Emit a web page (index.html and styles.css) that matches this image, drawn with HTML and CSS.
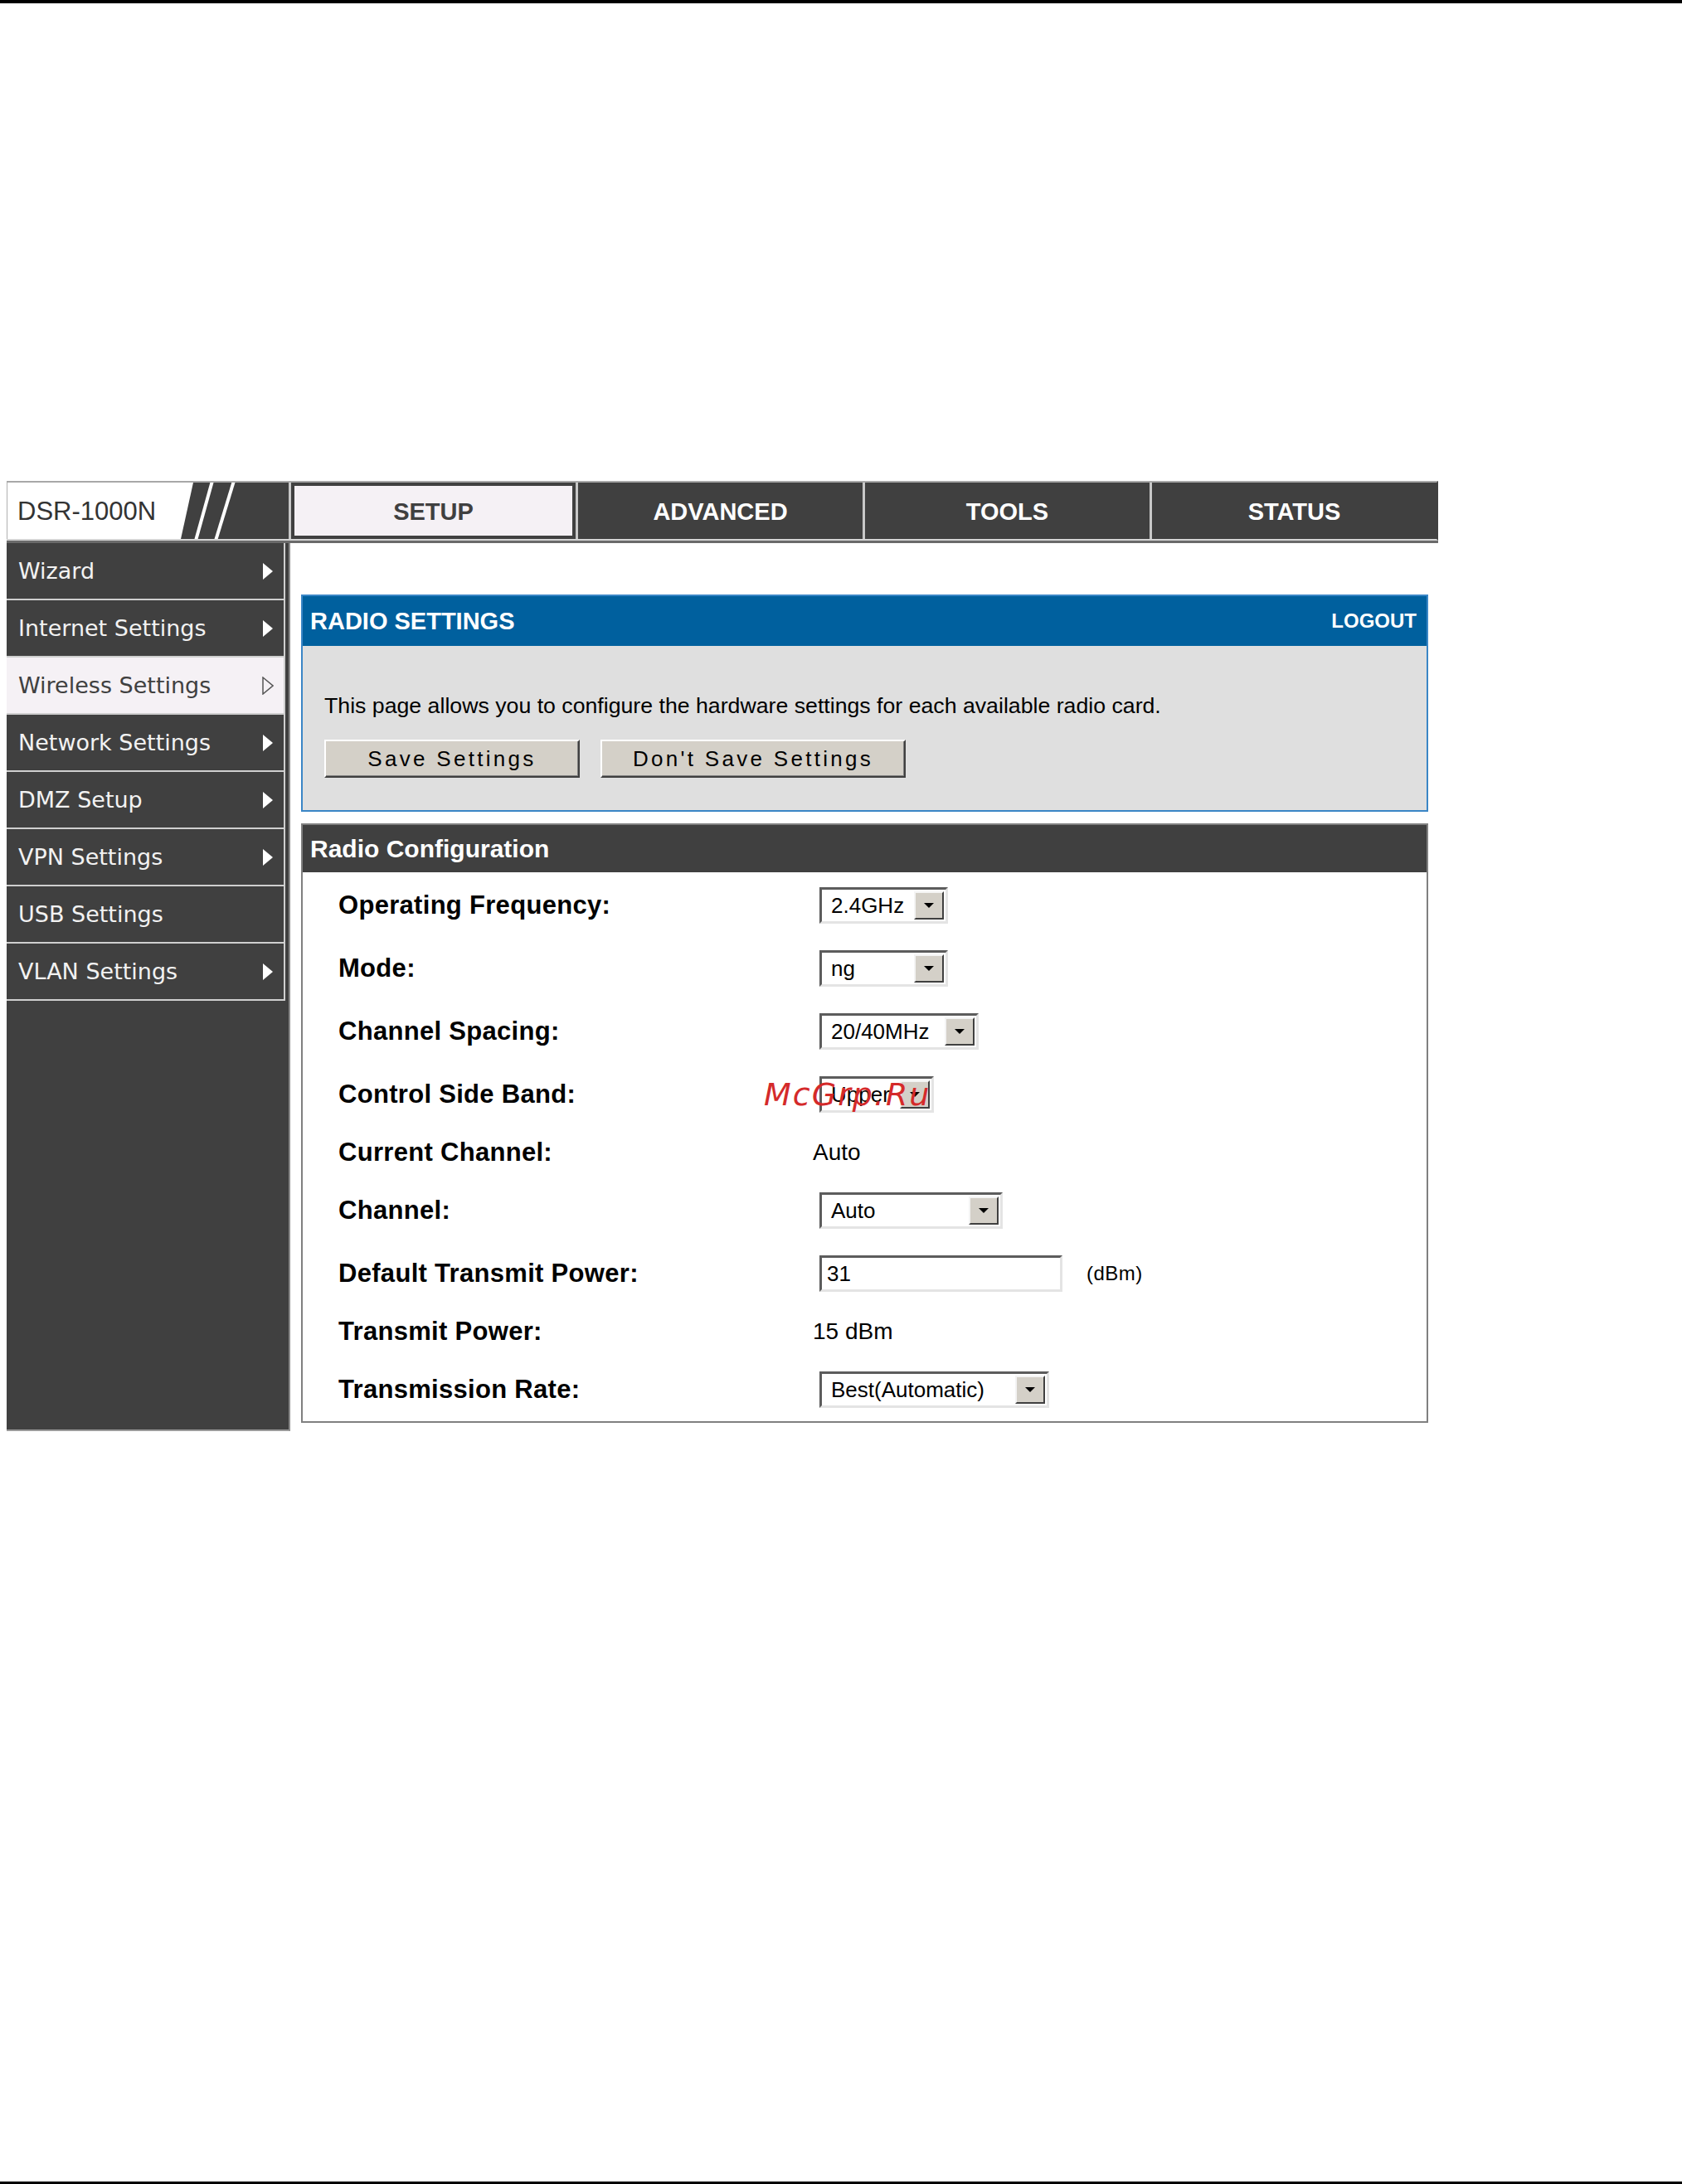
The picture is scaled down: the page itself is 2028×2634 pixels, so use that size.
FILE: index.html
```html
<!DOCTYPE html>
<html lang="en">
<head>
    <meta charset="UTF-8">
    <title>DSR-1000N - Radio Settings</title>
    <link rel="stylesheet" href="styles.css">
</head>
<body>
    <div class="page-rule"></div>

    <div class="router">
        <!-- Top navigation -->
        <div class="topnav">
            <div class="brand-cell">
                <div class="brand">DSR-1000N</div>
                <svg class="slashes" viewBox="0 0 60 68" width="60" height="68">
                    <line x1="23" y1="-2" x2="3" y2="70"/>
                    <line x1="49" y1="-2" x2="27" y2="70"/>
                </svg>
            </div>
            <div class="tab active">SETUP</div>
            <div class="tab">ADVANCED</div>
            <div class="tab">TOOLS</div>
            <div class="tab">STATUS</div>
        </div>

        <div class="main">
            <!-- Side menu -->
            <div class="sidebar">
                <div class="nav-item">Wizard <svg class="arrow" viewBox="0 0 14 22"><polygon points="1,1 13,11 1,21"/></svg></div>
                <div class="nav-item">Internet Settings <svg class="arrow" viewBox="0 0 14 22"><polygon points="1,1 13,11 1,21"/></svg></div>
                <div class="nav-item selected">Wireless Settings <svg class="arrow" viewBox="0 0 14 22"><polygon points="1,1 13,11 1,21"/></svg></div>
                <div class="nav-item">Network Settings <svg class="arrow" viewBox="0 0 14 22"><polygon points="1,1 13,11 1,21"/></svg></div>
                <div class="nav-item">DMZ Setup <svg class="arrow" viewBox="0 0 14 22"><polygon points="1,1 13,11 1,21"/></svg></div>
                <div class="nav-item">VPN Settings <svg class="arrow" viewBox="0 0 14 22"><polygon points="1,1 13,11 1,21"/></svg></div>
                <div class="nav-item">USB Settings</div>
                <div class="nav-item">VLAN Settings <svg class="arrow" viewBox="0 0 14 22"><polygon points="1,1 13,11 1,21"/></svg></div>
            </div>

            <div class="content">
                <!-- Intro panel -->
                <div class="panel-info">
                    <div class="info-head">
                        <span>RADIO SETTINGS</span>
                        <span class="logout">LOGOUT</span>
                    </div>
                    <div class="info-body">
                        <p class="intro">This page allows you to configure the hardware settings for each available radio card.</p>
                        <div class="actions">
                            <button class="btn btn-save">Save Settings</button>
                            <button class="btn btn-cancel">Don't Save Settings</button>
                        </div>
                    </div>
                </div>

                <!-- Radio configuration -->
                <div class="panel-config">
                    <div class="config-head">Radio Configuration</div>
                    <div class="config-body">
                        <div class="row">
                            <div class="label">Operating Frequency:</div>
                            <div class="select w-freq"><span class="select-text">2.4GHz</span><span class="select-btn"></span></div>
                        </div>
                        <div class="row">
                            <div class="label">Mode:</div>
                            <div class="select w-freq"><span class="select-text">ng</span><span class="select-btn"></span></div>
                        </div>
                        <div class="row">
                            <div class="label">Channel Spacing:</div>
                            <div class="select w-spacing"><span class="select-text">20/40MHz</span><span class="select-btn"></span></div>
                        </div>
                        <div class="row">
                            <div class="label">Control Side Band:</div>
                            <div class="select w-band"><span class="select-text">Upper</span><span class="select-btn"></span></div>
                            <span class="watermark">McGrp.Ru</span>
                        </div>
                        <div class="row row-text">
                            <div class="label">Current Channel:</div>
                            <div class="value">Auto</div>
                        </div>
                        <div class="row">
                            <div class="label">Channel:</div>
                            <div class="select w-channel"><span class="select-text">Auto</span><span class="select-btn"></span></div>
                        </div>
                        <div class="row">
                            <div class="label">Default Transmit Power:</div>
                            <input class="text-input" type="text" value="31">
                            <span class="unit">(dBm)</span>
                        </div>
                        <div class="row row-text">
                            <div class="label">Transmit Power:</div>
                            <div class="value">15 dBm</div>
                        </div>
                        <div class="row">
                            <div class="label">Transmission Rate:</div>
                            <div class="select w-rate"><span class="select-text">Best(Automatic)</span><span class="select-btn"></span></div>
                        </div>
                    </div>
                </div>
            </div>
        </div>
    </div>

    <div class="page-rule bottom"></div>
</body>
</html>
```

FILE: styles.css
```css
* {
    margin: 0;
    padding: 0;
    box-sizing: border-box;
}

body {
    width: 2028px;
    min-height: 2634px;
    background: #fff;
    font-family: "Liberation Sans", Arial, sans-serif;
    color: #000;
    display: flex;
    flex-direction: column;
}

.page-rule {
    height: 4px;
    background: #000;
}

.page-rule.bottom {
    height: 3px;
    margin-top: auto;
}

.router {
    width: 1726px;
    margin: 576px 0 0 8px;
}

/* top navigation */
.topnav {
    display: grid;
    grid-template-columns: 340px repeat(4, 1fr);
    gap: 3px;
    background: #c8c8c8;
    border-top: 2px solid #a8a8a8;
    border-right: 2px solid #404040;
    border-bottom: 2px solid #d4d4d4;
    box-shadow: 0 3px 0 #6a6a6a;
    height: 72px;
}

.brand-cell {
    display: flex;
    background: #404040;
    overflow: hidden;
}

.brand {
    width: 225px;
    background: #fff;
    clip-path: polygon(0 0, 225px 0, 210px 100%, 0 100%);
    color: #333;
    font-size: 31px;
    line-height: 70px;
    padding-left: 12px;
    border-left: 1px solid #b0b0b0;
}

.slashes {
    flex: none;
}

.slashes line {
    stroke: #fff;
    stroke-width: 4;
}

.tab {
    background: #404040;
    color: #fff;
    font-size: 29px;
    font-weight: bold;
    display: flex;
    align-items: center;
    justify-content: center;
    padding-top: 2px;
}

.tab.active {
    background: #f5f1f5;
    color: #404040;
    box-shadow: inset 0 0 0 4px #404040;
}

/* layout */
.main {
    display: flex;
    margin-top: 3px;
}

.sidebar {
    width: 342px;
    flex: none;
    background: #404040;
    border-right: 2px solid #8a8a8a;
    border-bottom: 2px solid #9a9a9a;
}

.nav-item {
    width: 336px;
    height: 69px;
    display: flex;
    align-items: center;
    justify-content: space-between;
    padding: 0 12px 0 14px;
    font-family: "DejaVu Sans", Verdana, sans-serif;
    font-size: 27px;
    color: #f2f2f2;
    border-right: 2px solid #cfcfcf;
    border-bottom: 2px solid #cfcfcf;
}

.nav-item .arrow {
    width: 14px;
    height: 22px;
}

.nav-item .arrow polygon {
    fill: #fff;
}

.nav-item.selected {
    background: #f5f1f5;
    color: #404040;
}

.nav-item.selected .arrow polygon {
    fill: none;
    stroke: #555;
    stroke-width: 1.5;
}

.content {
    flex: 1;
    padding: 62px 12px 10px 13px;
}

/* intro panel */
.panel-info {
    border: 2px solid #3a86c6;
    background: #dfdfdf;
}

.info-head {
    height: 60px;
    background: #00609e;
    color: #fff;
    display: flex;
    align-items: center;
    justify-content: space-between;
    padding: 0 12px 0 9px;
    font-size: 29px;
    font-weight: bold;
}

.info-head .logout {
    font-size: 24px;
}

.info-body {
    padding: 56px 26px 39px;
}

.intro {
    font-size: 26.7px;
    line-height: 32px;
}

.actions {
    display: flex;
    gap: 25px;
    margin-top: 25px;
}

.btn {
    height: 46px;
    background: #d4d0c8;
    border: 2px solid;
    border-color: #fff #404040 #404040 #fff;
    box-shadow: inset -1px -1px 0 #808080;
    font-family: "Liberation Sans", Arial, sans-serif;
    font-size: 26px;
    letter-spacing: 3.3px;
    color: #000;
}

.btn-save {
    width: 308px;
}

.btn-cancel {
    width: 368px;
}

/* radio configuration panel */
.panel-config {
    margin-top: 14px;
    border: 2px solid #808080;
}

.config-head {
    height: 57px;
    background: #404040;
    color: #fff;
    font-size: 30px;
    font-weight: bold;
    display: flex;
    align-items: center;
    padding-left: 9px;
}

.config-body {
    padding-top: 2px;
}

.row {
    position: relative;
    height: 76px;
    display: flex;
    align-items: center;
    padding-left: 43px;
}

.row.row-text {
    height: 64px;
}

.label {
    width: 572px;
    flex: none;
    font-size: 31px;
    font-weight: bold;
    letter-spacing: 0.3px;
}

.value {
    font-size: 28px;
}

.select {
    margin-left: 8px;
    height: 44px;
    display: flex;
    background: #fff;
    border: 3px solid;
    border-color: #5c5c5c #e4e4e4 #e4e4e4 #5c5c5c;
    padding: 2px;
}

.select-text {
    flex: 1;
    font-size: 26px;
    line-height: 34px;
    padding-left: 9px;
    white-space: nowrap;
}

.select-btn {
    width: 36px;
    background: #d4d0c8;
    border: 2px solid;
    border-color: #f4f4f4 #404040 #404040 #f4f4f4;
    display: flex;
    align-items: center;
    justify-content: center;
}

.select-btn::after {
    content: "";
    border-left: 6px solid transparent;
    border-right: 6px solid transparent;
    border-top: 6px solid #000;
}

.w-freq { width: 155px; }
.w-spacing { width: 192px; }
.w-band { width: 138px; }
.w-channel { width: 221px; }
.w-rate { width: 277px; }

.text-input {
    margin-left: 8px;
    width: 293px;
    height: 44px;
    border: 3px solid;
    border-color: #5c5c5c #e4e4e4 #e4e4e4 #5c5c5c;
    padding: 0 6px;
    font-family: "Liberation Sans", Arial, sans-serif;
    font-size: 26px;
    outline: none;
}

.unit {
    margin-left: 29px;
    font-size: 24px;
    letter-spacing: 0.5px;
}

.watermark {
    position: absolute;
    left: 556px;
    top: 16px;
    font-family: "DejaVu Sans", sans-serif;
    font-style: italic;
    font-size: 38px;
    letter-spacing: 2px;
    color: #d42a2a;
    line-height: 44px;
}
```
